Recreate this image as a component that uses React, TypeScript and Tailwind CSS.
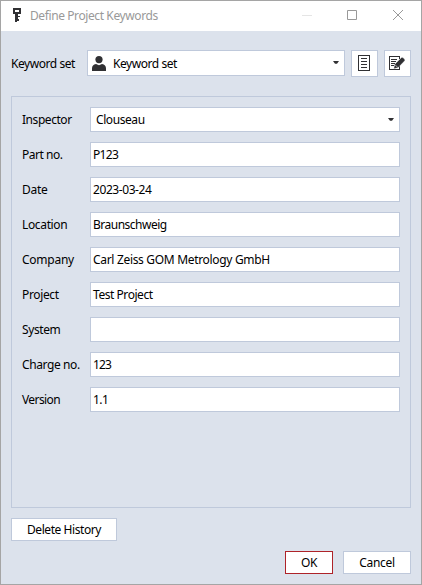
import React from "react";

type Field = { label: string; value: string; select?: boolean; labelClass: string; valueClass: string };

const fields: Field[] = [
  { label: "Inspector", value: "Clouseau", select: true, labelClass: "tracking-[-0.45px]", valueClass: "tracking-[-0.42px]" },
  { label: "Part no.", value: "P123", labelClass: "tracking-[-0.46px]", valueClass: "tracking-[-0.65px]" },
  { label: "Date", value: "2023-03-24", labelClass: "tracking-[-0.3px]", valueClass: "tracking-[-0.42px]" },
  { label: "Location", value: "Braunschweig", labelClass: "tracking-[-0.35px]", valueClass: "tracking-[-0.5px]" },
  { label: "Company", value: "Carl Zeiss GOM Metrology GmbH", labelClass: "tracking-[-0.25px]", valueClass: "tracking-[-0.32px]" },
  { label: "Project", value: "Test Project", labelClass: "tracking-[-0.35px]", valueClass: "tracking-[-0.45px]" },
  { label: "System", value: "", labelClass: "tracking-[-0.4px]", valueClass: "" },
  { label: "Charge no.", value: "123", labelClass: "tracking-[-0.4px]", valueClass: "tracking-[-0.9px]" },
  { label: "Version", value: "1.1", labelClass: "tracking-[-0.6px]", valueClass: "tracking-[-0.6px]" },
];

function Caret() {
  return (
    <svg width="6" height="3" viewBox="0 0 6 3" className="mb-px shrink-0" fill="#303033">
      <path d="M0 0h6L4 2.700H2z" />
    </svg>
  );
}

function KeyIcon() {
  return (
    <svg width="9" height="14" viewBox="0 0 9 14" className="mb-[2px]" fill="#303033" shapeRendering="crispEdges">
      <path fillRule="evenodd" d="M0 0h8v6H5v2h2v1H5v2h1v2H4v1H2V6H0zM2 2v2h4V2z" />
    </svg>
  );
}

function PersonIcon() {
  return (
    <svg width="14" height="15" viewBox="0 0 14 15" className="mt-px" fill="#303033">
      <circle cx="7" cy="3.6" r="3.6" />
      <path d="M0 15v-2.500C0 9.800 1.400 8.600 4 8l3 1.300L10 8c2.600.600 4 1.800 4 4.500V15z" />
    </svg>
  );
}

function ListIcon() {
  return (
    <svg width="12" height="16" viewBox="0 0 12 16" className="-mt-px -ml-px" fill="none" stroke="#303033" shapeRendering="crispEdges">
      <path d="M.5.5h11v15H.5zM3 3.500h6M3 6.500h6M3 9.500h6M3 12.500h6" />
    </svg>
  );
}

function EditIcon() {
  return (
    <svg width="17" height="15" viewBox="0 0 17 15" fill="none" stroke="#303033">
      <path d="M10.500 3V.5H.5v13h10V10M2 3.500h6M2 5.500h5M2 7.500h4M2 9.500h3" shapeRendering="crispEdges" />
      <path d="M4.800 12.800l1-4.600L12.300 1.800c1.200-1 4.200 1.500 3.400 3L9.200 11.600z" fill="#303033" stroke="#fff" strokeWidth=".3" />
      <path d="M6 8.700l2.600 2.600" stroke="#fff" strokeWidth=".6" />
    </svg>
  );
}

export default function App() {
  return (
    <div className="flex h-[585px] w-[422px] flex-col border border-[#a5a5a5] bg-[#dce2ec] font-['Noto_Sans','Open_Sans',sans-serif] text-[12px] leading-4 text-black">
      <header className="flex h-[30px] shrink-0 items-center bg-white pl-3">
        <KeyIcon />
        <span className="ml-2 whitespace-nowrap tracking-[-0.4px] text-[#999]">Define Project Keywords</span>
        <svg width="102" height="12" viewBox="0 0 102 12" className="ml-auto mr-[17px]" fill="none" stroke="#999">
          <path d="M0 5.500h10" stroke="#e5e5e5" />
          <path d="M45.500.5h9v9h-9z" />
          <path d="M91 0l10 10M101 0L91 10" />
        </svg>
      </header>
      <main className="flex flex-1 flex-col px-[10px] pt-[19px]">
        <div className="flex h-[27px] items-start">
          <span className="mt-[6px] w-[76px] whitespace-nowrap tracking-[-0.45px]">Keyword set</span>
          <div className="flex h-[26px] w-[258px] items-center border border-[#bfc9db] bg-white pl-1 pr-[5px]">
            <PersonIcon />
            <span className="ml-[7px] mt-[2px] flex-1 tracking-[-0.45px]">Keyword set</span>
            <Caret />
          </div>
          <button className="ml-[6px] flex size-[27px] items-center justify-center border border-[#bfc9db] bg-white"><ListIcon /></button>
          <button className="ml-[6px] flex size-[27px] items-center justify-center border border-[#bfc9db] bg-white"><EditIcon /></button>
        </div>
        <section className="mt-[19px] flex h-[412px] flex-col gap-[10px] border border-[#bfc9db] px-[10px] pt-[10px]">
          {fields.map((f) => (
            <div key={f.label} className="flex h-[25px] items-center">
              <span className={`w-[68px] whitespace-nowrap ${f.labelClass}`}>{f.label}</span>
              <div className={`flex h-[25px] w-[310px] items-center border border-[#bfc9db] bg-white pr-[5px] ${f.select ? "pl-[5px]" : "pl-[2px]"}`}>
                <span className={`flex-1 ${f.valueClass}`}>{f.value}</span>
                {f.select && <Caret />}
              </div>
            </div>
          ))}
        </section>
        <button className="mt-[10px] h-[23px] w-[106px] border border-[#bfc9db] bg-white tracking-[-0.43px]">Delete History</button>
        <footer className="mt-[10px] flex justify-end gap-[10px]">
          <button className="h-[23px] w-[48px] border border-[#ae2329] bg-white tracking-[-0.4px]">OK</button>
          <button className="h-[23px] w-[68px] border border-[#bfc9db] bg-white tracking-[-0.3px]">Cancel</button>
        </footer>
      </main>
    </div>
  );
}
